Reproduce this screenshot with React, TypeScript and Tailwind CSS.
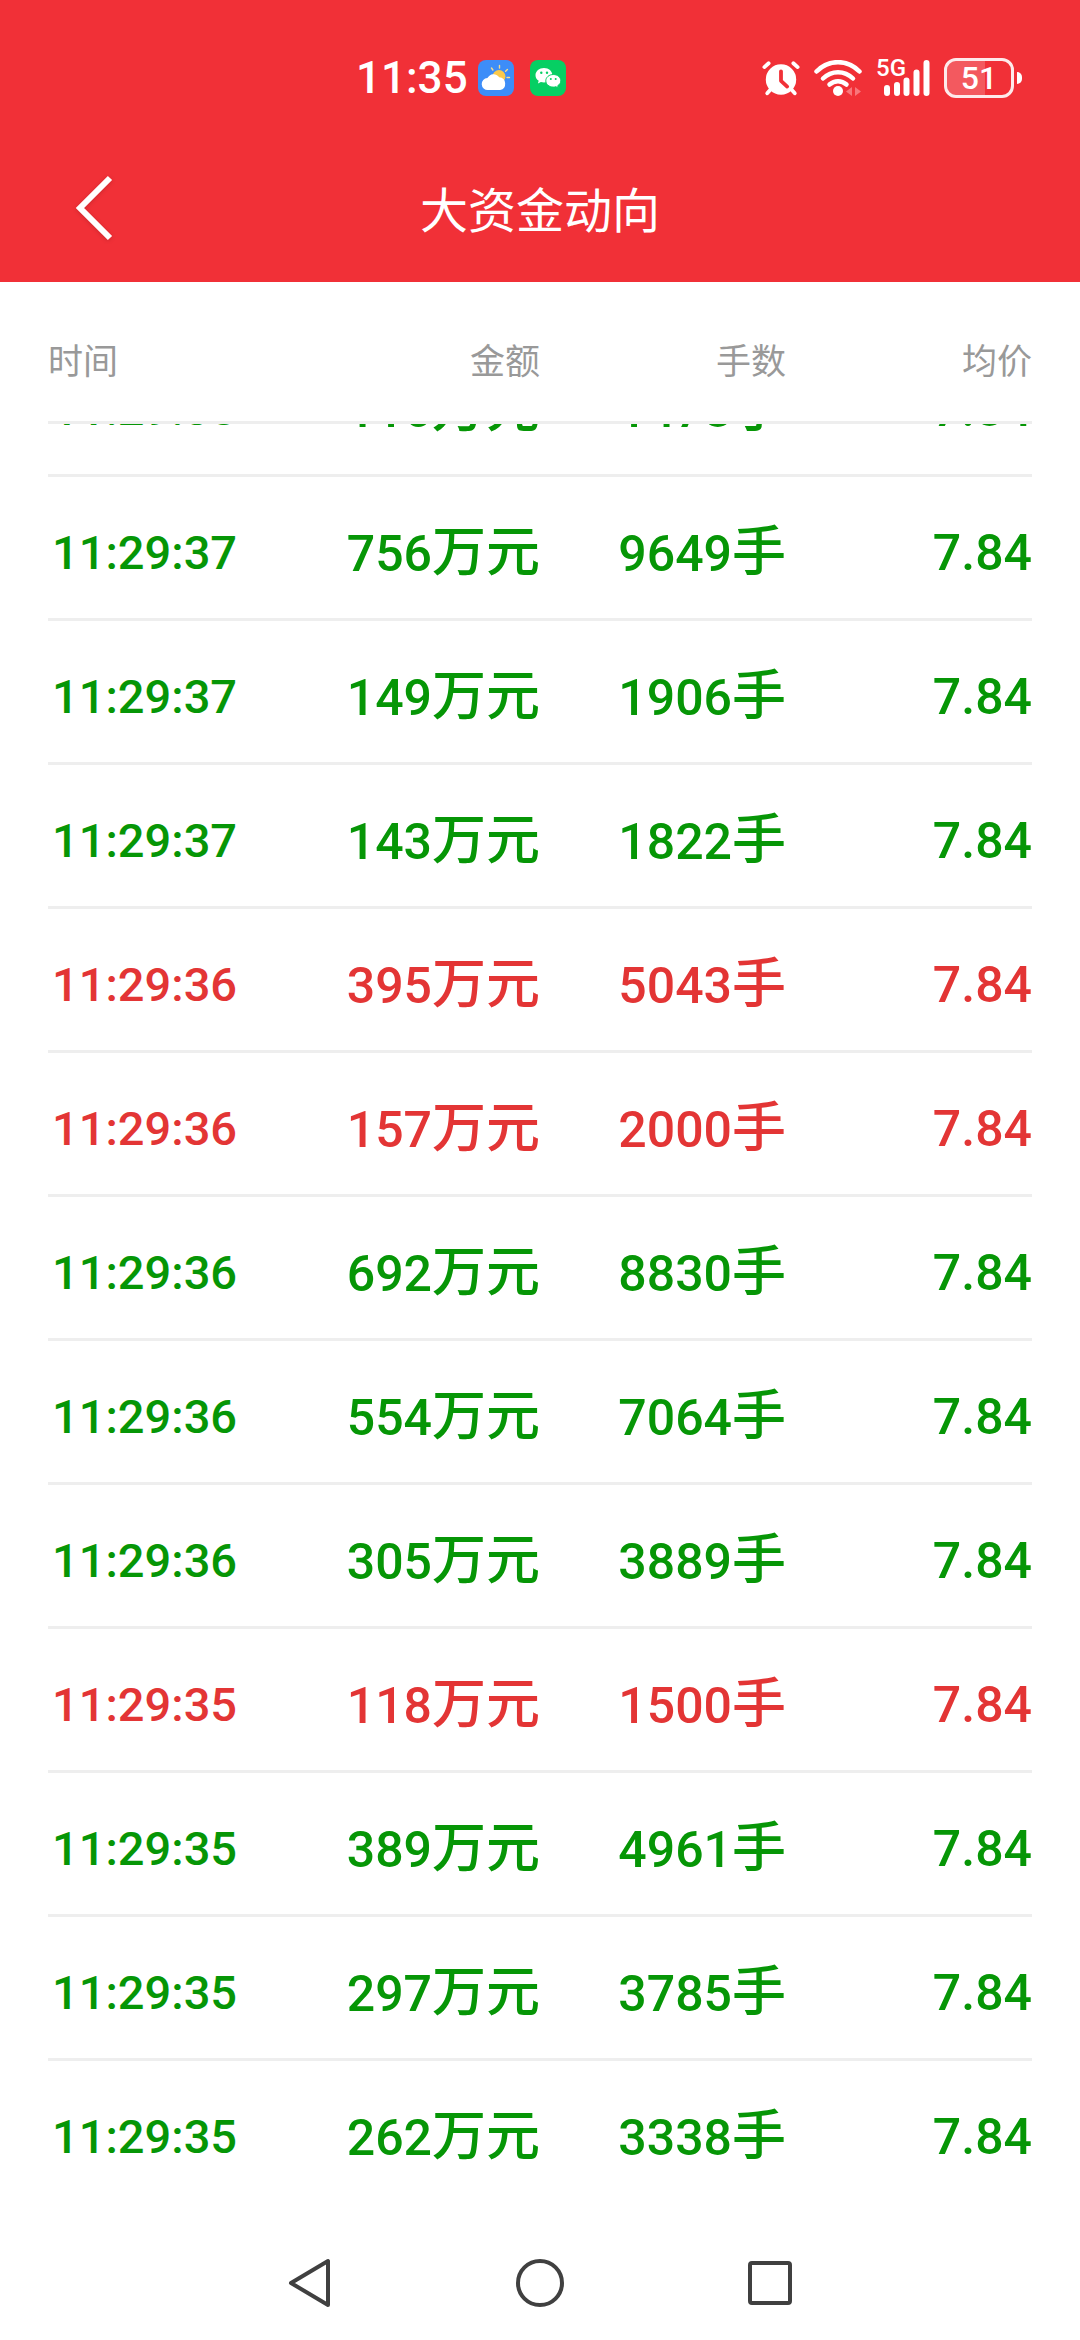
import React, { useLayoutEffect, useRef } from 'react';

type Side = 'buy' | 'sell';

interface Trade {
  time: string;
  amount: number;
  lots: number;
  price: string;
  side: Side;
}

const TRADES: Trade[] = [
  { time: '11:29:38', amount: 116, lots: 1478, price: '7.84', side: 'sell' },
  { time: '11:29:37', amount: 756, lots: 9649, price: '7.84', side: 'sell' },
  { time: '11:29:37', amount: 149, lots: 1906, price: '7.84', side: 'sell' },
  { time: '11:29:37', amount: 143, lots: 1822, price: '7.84', side: 'sell' },
  { time: '11:29:36', amount: 395, lots: 5043, price: '7.84', side: 'buy' },
  { time: '11:29:36', amount: 157, lots: 2000, price: '7.84', side: 'buy' },
  { time: '11:29:36', amount: 692, lots: 8830, price: '7.84', side: 'sell' },
  { time: '11:29:36', amount: 554, lots: 7064, price: '7.84', side: 'sell' },
  { time: '11:29:36', amount: 305, lots: 3889, price: '7.84', side: 'sell' },
  { time: '11:29:35', amount: 118, lots: 1500, price: '7.84', side: 'buy' },
  { time: '11:29:35', amount: 389, lots: 4961, price: '7.84', side: 'sell' },
  { time: '11:29:35', amount: 297, lots: 3785, price: '7.84', side: 'sell' },
  { time: '11:29:35', amount: 262, lots: 3338, price: '7.84', side: 'sell' },
];

const COLUMNS = ['时间', '金额', '手数', '均价'];

const WeatherIcon: React.FC = () => (
  <svg width="36" height="36" viewBox="0 0 36 36" aria-hidden="true">
    <rect width="36" height="36" rx="8" fill="#3d8df8" />
    <g stroke="#f5dc8c" strokeWidth="1.4" strokeLinecap="round">
      <path d="M21.500 5.500v2.500M13.500 8l1.400 2M29.400 9.400l-1.800 1.800M29 17.500h2.500" />
    </g>
    <circle cx="21" cy="16.500" r="6.500" fill="#fbc94a" />
    <path d="M10 30a6 6 0 0 1-.6-12 7 7 0 0 1 11.800-.8 6.500 6.500 0 0 1 1 12.800z" fill="#fff" />
  </svg>
);

const WeChatIcon: React.FC = () => (
  <svg width="36" height="36" viewBox="0 0 36 36" aria-hidden="true">
    <rect width="36" height="36" rx="8" fill="#06cf63" />
    <path d="M14 8c-4.800 0-8.500 3.200-8.500 7.200 0 2.300 1.200 4.300 3.200 5.600l-.8 2.700 3-1.600c1 .3 2 .5 3.100.5 4.700 0 8.400-3.200 8.400-7.200S18.800 8 14 8z" fill="#fff" />
    <path d="M23.300 14.500c-4.200 0-7.500 2.800-7.500 6.300s3.300 6.300 7.500 6.300c.9 0 1.800-.1 2.600-.4l2.500 1.400-.7-2.300c1.900-1.200 3.100-3 3.100-5 0-3.500-3.300-6.300-7.500-6.300z" fill="#fff" stroke="#06cf63" strokeWidth="1" />
    <g fill="#06cf63">
      <circle cx="11.300" cy="12.800" r="1.200" />
      <circle cx="17" cy="12.800" r="1.200" />
      <circle cx="20.800" cy="19" r="1" />
      <circle cx="25.700" cy="19" r="1" />
    </g>
  </svg>
);

const AlarmIcon: React.FC = () => (
  <svg width="38" height="36" viewBox="0 0 40 36" fill="none" strokeLinecap="round" aria-hidden="true">
    <circle cx="20" cy="19.500" r="16" fill="#fff" />
    <path d="M2.500 6.500L7 2.500M37.500 6.500L33 2.500" stroke="#fff" strokeWidth="4" />
    <path d="M9 30l-3.500 4M31 30l3.500 4" stroke="#fff" strokeWidth="4" />
    <path d="M20 11v10l6.500 6" stroke="#f13037" strokeWidth="4" strokeLinejoin="round" />
  </svg>
);

const WifiIcon: React.FC = () => (
  <svg width="48" height="36" viewBox="0 0 48 36" fill="none" strokeLinecap="round" aria-hidden="true">
    <g stroke="#fff" strokeWidth="4.500">
      <path d="M2.500 11.500c12-12.500 31-12.500 43 0" />
      <path d="M9 18.500c8.500-8.500 21.500-8.500 30 0" />
      <path d="M15.500 24.500c5-4.500 12-4.500 17 0" />
    </g>
    <circle cx="24" cy="31" r="5" fill="#fff" />
    <path d="M38 27v9l-6-4.500zM41 27v9l6-4.500z" fill="#f8767b" />
  </svg>
);

const SignalIcon: React.FC = () => (
  <svg width="46" height="36" viewBox="0 0 46 36" stroke="#fff" strokeWidth="6" strokeLinecap="round" aria-hidden="true">
    <path d="M3 28v5M13 25v8M22.500 20.500v12.500M32.500 12.500v20.500M42.500 3v30" />
  </svg>
);

const StatusBar: React.FC = () => (
  <div className="flex h-[156px] items-center justify-between pl-[356px] pr-[58px] font-['Roboto',sans-serif] font-medium">
    <div className="flex items-center gap-2.5">
      <span className="text-[44px] leading-none">11:35</span>
      <div className="flex items-center gap-4">
        <WeatherIcon />
        <WeChatIcon />
      </div>
    </div>
    <div className="flex items-center gap-3.5">
      <AlarmIcon />
      <WifiIcon />
      <div className="relative flex pl-2">
        <span className="absolute -top-1 left-0 text-[24px] leading-none">5G</span>
        <SignalIcon />
      </div>
      <div className="flex items-center gap-[3px]">
        <div className="relative flex h-10 w-[70px] items-center justify-center rounded-[12px] border-3 border-white/90">
          <div className="absolute inset-y-0 left-0 w-[59%] rounded-l-[9px] bg-white/20" />
          <span className="relative text-[32px] leading-none">51</span>
        </div>
        <div className="h-3 w-[5px] rounded-r-full bg-white" />
      </div>
    </div>
  </div>
);

const NavBar: React.FC = () => (
  <nav className="flex h-[135px] shrink-0 items-center justify-center bg-white pt-5">
    <button aria-label="返回" className="flex w-[230px] justify-center">
      <svg width="48" height="50" viewBox="0 0 48 50" fill="none" stroke="#404040" strokeWidth="4" strokeLinejoin="round">
        <path d="M42 3v44L5 25z" />
      </svg>
    </button>
    <button aria-label="主页" className="flex w-[230px] justify-center">
      <svg width="48" height="48" viewBox="0 0 48 48" fill="none" stroke="#404040" strokeWidth="4">
        <circle cx="24" cy="24" r="22" />
      </svg>
    </button>
    <button aria-label="最近任务" className="flex w-[230px] justify-center">
      <svg width="44" height="44" viewBox="0 0 44 44" fill="none" stroke="#404040" strokeWidth="4">
        <rect x="2" y="2" width="40" height="40" rx="2" />
      </svg>
    </button>
  </nav>
);

const TradeRow: React.FC<{ trade: Trade }> = ({ trade }) => (
  <tr className={`group h-36 text-right font-['Roboto','Noto_Sans_CJK_SC',sans-serif] text-[50px] font-medium leading-none ${trade.side === 'buy' ? 'text-[#e33535]' : 'text-[#069606]'}`}>
    <td className="border-b-3 border-[#eeeeee] pl-1 pt-2.5 text-left text-[47px] group-last:border-transparent">{trade.time}</td>
    <td className="border-b-3 border-[#eeeeee] pt-2.5 group-last:border-transparent">
      {trade.amount}<span className="text-[54px]">万元</span>
    </td>
    <td className="border-b-3 border-[#eeeeee] pt-2.5 group-last:border-transparent">
      {trade.lots}<span className="text-[54px]">手</span>
    </td>
    <td className="border-b-3 border-[#eeeeee] pt-2.5 group-last:border-transparent">{trade.price}</td>
  </tr>
);

export default function App() {
  const listRef = useRef<HTMLDivElement | null>(null);

  // newest trades are on top, the list opens on the oldest ones
  useLayoutEffect(() => {
    if (listRef.current) listRef.current.scrollTop = listRef.current.scrollHeight;
  }, []);

  return (
    <div className="flex h-screen flex-col bg-white font-['Noto_Sans_CJK_SC',sans-serif]">
      <header className="shrink-0 bg-[#f13037] text-white">
        <StatusBar />
        <div className="grid h-[126px] grid-cols-[1fr_auto_1fr] items-start px-[72px] pt-4">
          <button aria-label="返回上一页" className="flex h-[72px] w-12 items-center">
            <svg width="46" height="68" viewBox="0 0 46 68" fill="none" className="drop-shadow-sm">
              <path d="M38 4L8 34l30 30" stroke="#fff" strokeWidth="6" />
            </svg>
          </button>
          <h1 className="text-[48px] leading-[70px]">大资金动向</h1>
        </div>
      </header>

      <main className="flex min-h-0 flex-1 flex-col px-12">
        <table className="w-full table-fixed border-separate border-spacing-0">
          <thead>
            <tr>
              {COLUMNS.map(name => (
                <th
                  key={name}
                  className="h-[142px] border-b-3 border-[#eeeeee] pt-4 text-right text-[35px] font-normal text-[#999999] first:text-left"
                >
                  {name}
                </th>
              ))}
            </tr>
          </thead>
        </table>
        <div ref={listRef} className="min-h-0 flex-1 overflow-y-auto [scrollbar-width:none]">
          <table className="w-full table-fixed border-separate border-spacing-0">
            <tbody>
              {TRADES.map((trade, i) => (
                <TradeRow key={i} trade={trade} />
              ))}
            </tbody>
          </table>
        </div>
      </main>

      <NavBar />
    </div>
  );
}
